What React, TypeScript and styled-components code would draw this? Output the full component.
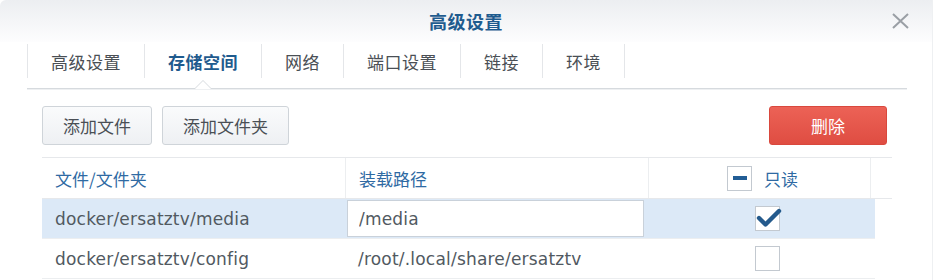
import styled, { createGlobalStyle } from "styled-components";

const GlobalStyle = createGlobalStyle`
  body {
    margin: 0;
    background: #fff;
    font-family: "DejaVu Sans", "Noto Sans CJK SC", sans-serif;
    -webkit-font-smoothing: antialiased;
  }
`;

const tabs = ["高级设置", "存储空间", "网络", "端口设置", "链接", "环境"];

const rows = [
  { src: "docker/ersatztv/media", mount: "/media", readOnly: true, selected: true },
  { src: "docker/ersatztv/config", mount: "/root/.local/share/ersatztv", readOnly: false, selected: false },
];

const App = () => {
  return (
    <Dialog>
      <GlobalStyle />
      <TitleBar>
        <span />
        <Title>高级设置</Title>
        <CloseBtn aria-label="关闭">
          <svg width="19" height="16" viewBox="0 0 19 16">
            <path d="M2 1 L17 15 M17 1 L2 15" stroke="#9a9fa5" strokeWidth="2" fill="none" />
          </svg>
        </CloseBtn>
      </TitleBar>

      <TabBar>
        {tabs.map((t) => (
          <Tab key={t} $active={t === "存储空间"}>
            {t}
          </Tab>
        ))}
      </TabBar>

      <Content>
        <Toolbar>
          <Button>添加文件</Button>
          <Button>添加文件夹</Button>
          <Spacer />
          <DangerButton>删除</DangerButton>
        </Toolbar>

        <Table>
          <HeadRow>
            <HeadCell>文件/文件夹</HeadCell>
            <HeadCell>装载路径</HeadCell>
            <HeadCell $center>
              <CheckBox>
                <Dash />
              </CheckBox>
              只读
            </HeadCell>
            <HeadCell />
          </HeadRow>
          {rows.map((r) => (
            <Row key={r.src} $selected={r.selected}>
              <Cell>{r.src}</Cell>
              <Cell>{r.selected ? <PathInput defaultValue={r.mount} /> : r.mount}</Cell>
              <Cell $center>
                <CheckBox>
                  {r.readOnly && (
                    <svg width="26" height="22" viewBox="0 0 26 22">
                      <path
                        d="M3 11 L9.5 17.5 L23 4"
                        stroke="#245a8c"
                        strokeWidth="4.4"
                        fill="none"
                        strokeLinecap="round"
                        strokeLinejoin="round"
                      />
                    </svg>
                  )}
                </CheckBox>
              </Cell>
            </Row>
          ))}
        </Table>
      </Content>
    </Dialog>
  );
};

export default App;

const Dialog = styled.div`
  width: 933px;
  height: 280px;
  overflow: hidden;
  background: #fff;
  border-right: 1px solid #eef0f2;
  box-sizing: border-box;
  border-top-left-radius: 6px;
`;

const TitleBar = styled.div`
  height: 42px;
  display: grid;
  grid-template-columns: 1fr auto 1fr;
  align-items: center;
  background: linear-gradient(#eceef1, #fdfdfe);
`;

const Title = styled.h1`
  margin: 0;
  font-family: "Noto Sans CJK SC", sans-serif;
  font-size: 18px;
  font-weight: 700;
  color: #1f5b8e;
  letter-spacing: 0.5px;
`;

const CloseBtn = styled.button`
  justify-self: end;
  margin-right: 22px;
  margin-top: -1px;
  border: 0;
  background: none;
  padding: 0;
  display: flex;
`;

const TabBar = styled.div`
  display: flex;
  margin: 2px 25px 0 27px;
  padding-bottom: 10px;
  border-bottom: 1px solid #d6dade;
  box-shadow: 0 1px 0 #eef0f2;
`;

const Tab = styled.div<{ $active?: boolean }>`
  position: relative;
  height: 34px;
  display: flex;
  align-items: center;
  padding: 0 23px;
  border-left: 1px solid #e4e6e9;
  font-family: "Noto Sans CJK SC", sans-serif;
  font-size: 17px;
  letter-spacing: 0.5px;
  color: ${(p) => (p.$active ? "#1f5b8e" : "#4a4f55")};
  font-weight: ${(p) => (p.$active ? 700 : 400)};
  &:last-child {
    border-right: 1px solid #e4e6e9;
  }
  ${(p) =>
    p.$active &&
    `
    &::before, &::after {
      content: "";
      position: absolute;
      left: 50%;
      width: 0;
      height: 0;
      transform: translateX(-50%);
      bottom: -11px;
    }
    &::before {
      border-left: 9px solid transparent;
      border-right: 9px solid transparent;
      border-bottom: 9px solid #d6dade;
    }
    &::after {
      border-left: 8px solid transparent;
      border-right: 8px solid transparent;
      border-bottom: 8px solid #fff;
    }
  `}
`;

const Content = styled.div`
  padding: 17px 40px 0 42px;
`;

const Toolbar = styled.div`
  display: flex;
  gap: 10px;
  padding-right: 5px;
  padding-bottom: 12px;
  border-bottom: 1px solid #e6e8eb;
`;

const Spacer = styled.div`
  flex: 1;
`;

const Button = styled.button`
  height: 39px;
  padding: 0 20px;
  border: 1px solid #cfd4d9;
  border-radius: 3px;
  background: linear-gradient(#fafbfc, #eef0f3);
  font-family: "Noto Sans CJK SC", sans-serif;
  font-size: 17px;
  color: #4a4f55;
`;

const DangerButton = styled(Button)`
  width: 118px;
  border-color: #d9483d;
  background: linear-gradient(#ec6256, #df4d42);
  color: #fff;
`;

const Table = styled.div`
  display: flex;
  flex-direction: column;
`;

const HeadRow = styled.div`
  display: grid;
  grid-template-columns: 303px 303px 222px 1fr;
  height: 40px;
  border-bottom: 1px solid #e6e8eb;
`;

const HeadCell = styled.div<{ $center?: boolean }>`
  display: flex;
  align-items: center;
  gap: 12px;
  padding-left: ${(p) => (p.$center ? "6px" : "13px")};
  justify-content: ${(p) => (p.$center ? "center" : "flex-start")};
  font-family: "Noto Sans CJK SC", sans-serif;
  font-size: 17px;
  color: #2f6aa3;
  & + & {
    border-left: 1px solid #eceef0;
  }
`;

const Row = styled.div<{ $selected?: boolean }>`
  display: grid;
  grid-template-columns: 303px 303px 227px;
  width: 833px;
  height: 39px;
  border-bottom: 1px solid #eceef0;
  background: ${(p) => (p.$selected ? "#dce9f7" : "transparent")};
`;

const Cell = styled.div<{ $center?: boolean }>`
  display: flex;
  align-items: center;
  justify-content: ${(p) => (p.$center ? "center" : "flex-start")};
  padding-left: ${(p) => (p.$center ? "12px" : "13px")};
  font-size: 17px;
  letter-spacing: 0.2px;
  color: #515961;
  white-space: nowrap;
`;

const PathInput = styled.input`
  box-sizing: border-box;
  width: 297px;
  height: 37px;
  margin-left: -11px;
  padding: 0 11px;
  border: 1px solid #c9d1da;
  background: #fff;
  font-family: "DejaVu Sans", sans-serif;
  font-size: 17px;
  letter-spacing: 0.2px;
  color: #515961;
  outline: none;
`;

const CheckBox = styled.span`
  position: relative;
  box-sizing: border-box;
  width: 25px;
  height: 25px;
  border: 1px solid #c3c9d0;
  background: #fff;
  display: flex;
  align-items: center;
  justify-content: center;
  & > svg {
    position: absolute;
    left: 0;
    top: 0;
  }
`;

const Dash = styled.span`
  width: 14px;
  height: 4px;
  background: #225d95;
`;
